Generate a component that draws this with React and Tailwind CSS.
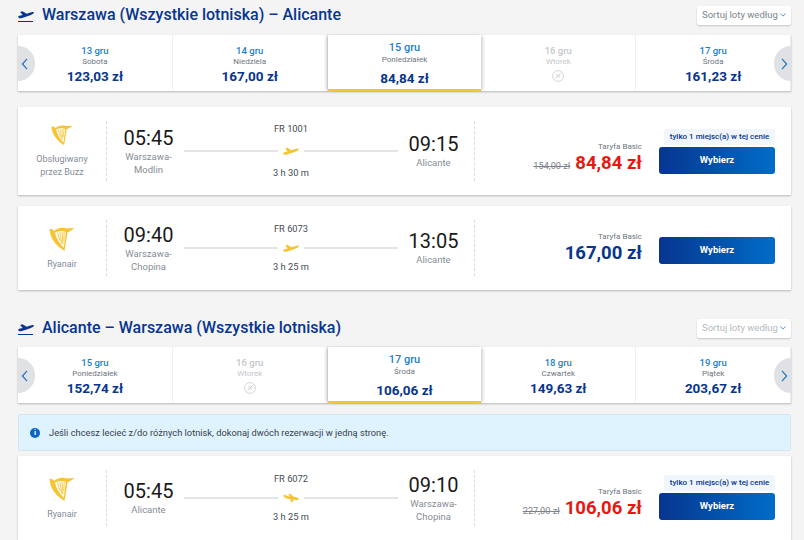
const navy = 'text-[#073590]'

const PlaneUp = ({ className }) => (
    <svg viewBox="0 0 24 12" className={className} fill="currentColor">
        <path d="M0.3 9.6 C0.3 8.6 1 8.2 2 7.9 L7 6.8 L3.2 2.2 L6.6 1.2 L13 5 L18.6 3 C20.6 2.3 22.8 1.9 23.6 2.5 C24.2 3.2 23.4 4.6 22 5.4 C20.4 6.4 18.2 7.2 16.2 7.9 L6 11.2 C3.4 11.9 0.5 11.4 0.3 9.6 Z" />
    </svg>
)

const PlaneDown = ({ className }) => (
    <svg viewBox="0 0 24 12" className={className} fill="currentColor">
        <path d="M0 2.6 L3 1.2 L6 3 L10.6 3.6 L7.8 0 L11 0 L16 4.2 L21 5.4 C22.8 5.9 24 7 23.8 8 C23.5 9.2 21.6 9.2 20 9 L15.8 8.4 L14.4 12 L11 11.6 L11.6 7.8 L4 6.4 Z" />
    </svg>
)

const HeaderPlane = () => (
    <div className="w-[16px] flex flex-col text-[#073590] mr-[8px] mt-[1px]">
        <PlaneUp className="w-[16px] h-[9px]" />
        <div className="h-[1px] w-[15px] bg-[#073590] mt-[2px]" />
    </div>
)

const Harp = ({ small }) => (
    <svg viewBox="0 0 26 26" className={small ? 'w-[22px] h-[22px]' : 'w-[26px] h-[26px]'} fill="none">
        <path d="M0.5 3 L3 3 C4 3.5 4.5 4.5 5 5 C9 1.5 14 1 18 2.5 L25.5 2 C23 4 20 5.5 18.5 6.5 L15.5 25 L14 24 C8 20 1 13 0.5 3 Z" fill="#f6c433" />
        <path d="M6 6.6 C10 4.6 14 4.6 16.9 6 L14.7 21.8 C10 17 7 12 6 6.6 Z" fill="#fff" />
        <path d="M8.4 6.5 L11.2 15.5 M10.8 5.8 L12.8 18 M13 5.6 L14 18.5 M15.2 5.8 L14.8 15" stroke="#f6c433" strokeWidth="0.9" />
    </svg>
)

const NoFlight = () => (
    <svg viewBox="0 0 12 12" className="w-[12px] h-[12px] text-[#c9cdd1]" fill="none" stroke="currentColor">
        <circle cx="6" cy="6" r="5.4" strokeWidth="0.8" />
        <path d="M3.4 8.6 L8.8 3.2 M4.4 4.6 L6.6 5.4 M6.6 5.4 L7.4 7.6" strokeWidth="1" />
    </svg>
)

const Chevron = ({ dir }) => (
    <svg viewBox="0 0 8 14" className="w-[7px] h-[12px] text-[#1d72c5]" fill="none" stroke="currentColor" strokeWidth="1.4">
        <path d={dir === 'left' ? 'M7 1 L1.5 7 L7 13' : 'M1 1 L6.5 7 L1 13'} />
    </svg>
)

const DayTab = ({ date, day, price, selected }) => {
    if (selected) {
        return (
            <div className="relative z-10 flex-1 h-full flex flex-col items-center border-b-[2px] border-[#f6c433] shadow-[-3px_0_3px_-1px_rgba(0,0,0,0.18),3px_0_3px_-1px_rgba(0,0,0,0.18)] bg-white pt-[6px]">
                <span className="text-[11px] leading-[13px] font-medium text-[#1c7fd0]">{date}</span>
                <span className="text-[8px] leading-[11px] text-[#6d7680]">{day}</span>
                <span className={`text-[13.5px] leading-[16px] font-bold ${navy} mt-[5px]`}>{price}</span>
            </div>
        )
    }
    if (!price) {
        return (
            <div className="flex-1 h-full flex flex-col items-center border-r border-[#eeeeee] pt-[10px]">
                <span className="text-[9.5px] leading-[12px] font-medium text-[#c3c7cb]">{date}</span>
                <span className="text-[8px] leading-[11px] text-[#c3c7cb] -mt-[1px]">{day}</span>
                <div className="mt-[3px]"><NoFlight /></div>
            </div>
        )
    }
    return (
        <div className="flex-1 h-full flex flex-col items-center border-r border-[#eeeeee] pt-[10px]">
            <span className="text-[9.5px] leading-[12px] font-medium text-[#1c7fd0]">{date}</span>
            <span className="text-[8px] leading-[11px] text-[#6d7680] -mt-[1px]">{day}</span>
            <span className={`text-[13.5px] leading-[16px] font-bold ${navy} mt-[1px]`}>{price}</span>
        </div>
    )
}

const DayStrip = ({ days }) => (
    <div className="relative flex h-[56px] bg-white shadow-[0_1px_2px_rgba(0,0,0,0.25)]">
        {days.map((d) => <DayTab key={d.date} {...d} />)}
        <div className="absolute z-20 left-0 top-[11px] w-[17px] h-[35px] rounded-r-full bg-[#dfe1e4] flex items-center pl-[3px]">
            <Chevron dir="left" />
        </div>
        <div className="absolute z-20 right-0 top-[11px] w-[17px] h-[35px] rounded-l-full bg-[#dfe1e4] flex items-center pl-[7px]">
            <Chevron dir="right" />
        </div>
    </div>
)

const FlightCard = ({ h, gap, priceMt = '', actionMb = '', carrier, small, from, to, dep, arr, no, time, landing, old, price, badge }) => (
    <div className={`flex items-stretch bg-white shadow-[0_1px_2px_rgba(0,0,0,0.25)] ${h} py-[14px]`}>
        <div className="w-[89px] shrink-0 flex flex-col items-center justify-center border-r border-dashed border-[#dcdcdc] text-[9px] leading-[13px] text-[#868d95] text-center">
            <Harp small={small} />
            <span className={small ? 'mt-[7px]' : 'mt-[6px]'}>{carrier}</span>
        </div>
        <div className="w-[77px] shrink-0 pl-[6px] flex flex-col items-center justify-center">
            <span className="text-[20px] leading-[23px] text-[#1a1a1a]">{dep}</span>
            <span className="text-[9.5px] leading-[13px] text-[#868d95] text-center w-[60px]">{from}</span>
        </div>
        <div className="w-[214px] shrink-0 flex flex-col items-center justify-center text-[9.3px] text-[#444b52]">
            <span className="leading-[12px]">{no}</span>
            <div className={`flex w-full items-center gap-[5px] ${gap} text-[#f6c433]`}>
                <div className="flex-1 h-[2px] bg-[#e4e4e4]" />
                {landing ? <PlaneDown className="w-[16px] h-[8px]" /> : <PlaneUp className="w-[16px] h-[8px]" />}
                <div className="flex-1 h-[2px] bg-[#e4e4e4]" />
            </div>
            <span className="leading-[12px]">{time}</span>
        </div>
        <div className="w-[77px] shrink-0 pr-[5px] flex flex-col items-center justify-center border-r border-dashed border-[#dcdcdc]">
            <span className="text-[20px] leading-[23px] text-[#1a1a1a]">{arr}</span>
            <span className="text-[9.5px] leading-[13px] text-[#868d95] text-center w-[60px]">{to}</span>
        </div>
        <div className={`flex-1 flex flex-col items-end justify-center ${priceMt}`}>
            <span className="text-[8px] leading-[11px] text-[#6d7680]">Taryfa Basic</span>
            <div className="flex items-baseline gap-[5px]">
                {old && <span className="text-[9.2px] text-[#7c8288] line-through">{old}</span>}
                <span className={`text-[18.5px] leading-[23px] font-bold ${old ? 'text-[#e8170f]' : navy}`}>{price}</span>
            </div>
        </div>
        <div className={`w-[116px] shrink-0 ml-[17px] mr-[16px] flex flex-col items-end justify-center ${actionMb}`}>
            {badge && (
                <span className={`mb-[2px] w-[111px] h-[16px] rounded-[2px] bg-[#f0f6fb] text-[8px] leading-[16px] font-medium ${navy} text-center whitespace-nowrap`}>
                    tylko 1 miejsc(a) w tej cenie
                </span>
            )}
            <button className={`w-full h-[27px] rounded-[3px] bg-gradient-to-r from-[#073590] to-[#006dc8] text-white text-[9.5px] font-bold ${badge ? '' : 'mt-[4px]'}`}>
                Wybierz
            </button>
        </div>
    </div>
)

const Header = ({ title, faded, className }) => (
    <div className={`flex items-center h-[20px] ${className}`}>
        <HeaderPlane />
        <h2 className={`text-[16px] leading-[20px] font-medium ${navy}`}>{title}</h2>
        <div className={`ml-auto w-[94px] h-[19px] flex items-center justify-center gap-[2px] bg-white rounded-[2px] shadow-[0_1px_2px_rgba(0,0,0,0.2)] text-[9.5px] ${faded ? 'text-[#b4babf]' : 'text-[#7a838c]'}`}>
            Sortuj loty według
            <svg viewBox="0 0 8 5" className="w-[6px] h-[4px] text-[#1d72c5]" fill="none" stroke="currentColor" strokeWidth="1">
                <path d="M0.5 0.5 L4 4 L7.5 0.5" />
            </svg>
        </div>
    </div>
)

const out = [
    { date: '13 gru', day: 'Sobota', price: '123,03 zł' },
    { date: '14 gru', day: 'Niedziela', price: '167,00 zł' },
    { date: '15 gru', day: 'Poniedziałek', price: '84,84 zł', selected: true },
    { date: '16 gru', day: 'Wtorek' },
    { date: '17 gru', day: 'Środa', price: '161,23 zł' },
]

const back = [
    { date: '15 gru', day: 'Poniedziałek', price: '152,74 zł' },
    { date: '16 gru', day: 'Wtorek' },
    { date: '17 gru', day: 'Środa', price: '106,06 zł', selected: true },
    { date: '18 gru', day: 'Czwartek', price: '149,63 zł' },
    { date: '19 gru', day: 'Piątek', price: '203,67 zł' },
]

export default function App() {
    return (
        <div className="h-[540px] overflow-hidden bg-[#f4f4f4] pl-[18px] pr-[13px] pt-[5px] font-['Roboto',sans-serif]">
            <Header title="Warszawa (Wszystkie lotniska) – Alicante" className="mb-[10px]" />
            <DayStrip days={out} />
            <div className="mt-[16px] flex flex-col gap-[11px]">
                <FlightCard h="h-[88px]" gap="my-[12px]" priceMt="mt-[14px]" carrier={<>Obsługiwany<br />przez Buzz</>} small from="Warszawa-Modlin" to="Alicante" dep="05:45" arr="09:15" no="FR 1001" time="3 h 30 m" old="154,00 zł" price="84,84 zł" badge />
                <FlightCard h="h-[84px]" gap="my-[9px]" carrier="Ryanair" from="Warszawa-Chopina" to="Alicante" dep="09:40" arr="13:05" no="FR 6073" time="3 h 25 m" price="167,00 zł" />
            </div>
            <Header title="Alicante – Warszawa (Wszystkie lotniska)" faded className="mt-[28px] mb-[9px]" />
            <DayStrip days={back} />
            <div className="mt-[11px] h-[37px] flex items-center gap-[9px] pl-[11px] rounded-[2px] bg-[#dff3fe] border border-[#d3e6f0] text-[9.3px] text-[#39424a]">
                <span className="w-[10px] h-[10px] rounded-full bg-[#0a66c2] text-white text-[8px] leading-[10px] font-bold text-center">i</span>
                Jeśli chcesz lecieć z/do różnych lotnisk, dokonaj dwóch rezerwacji w jedną stronę.
            </div>
            <div className="mt-[5px]">
                <FlightCard h="h-[84px]" gap="my-[9px]" priceMt="mt-[10px]" actionMb="mb-[2px]" carrier="Ryanair" from="Alicante" to="Warszawa-Chopina" dep="05:45" arr="09:10" no="FR 6072" time="3 h 25 m" landing old="227,00 zł" price="106,06 zł" badge />
            </div>
        </div>
    )
}
